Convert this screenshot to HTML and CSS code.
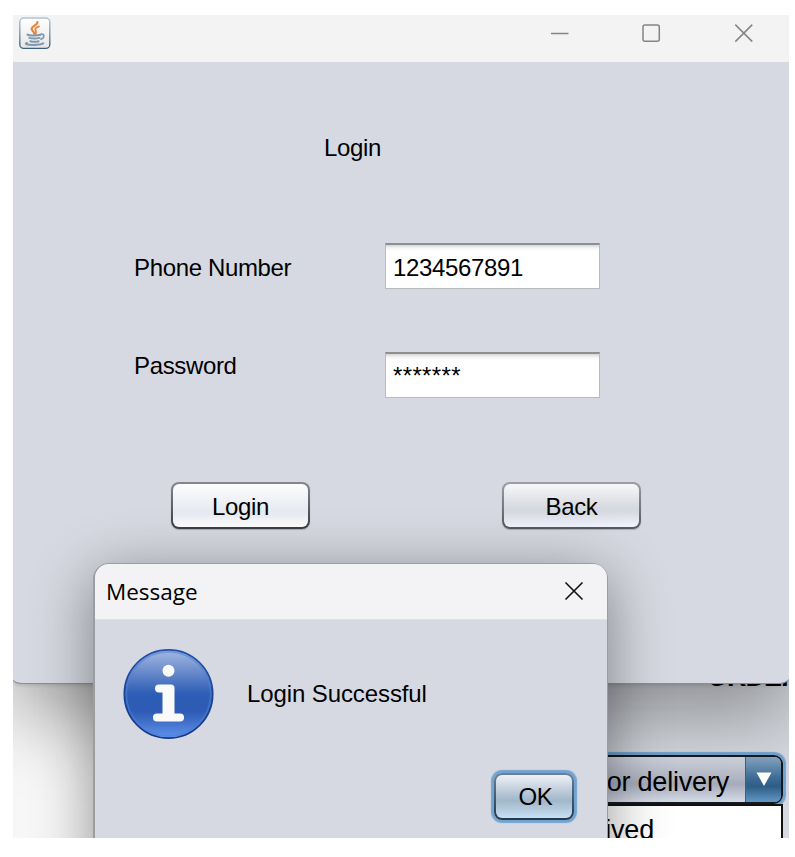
FILE: index.html
```html
<!DOCTYPE html>
<html lang="en">
<head>
<meta charset="utf-8">
<title>Login</title>
<link rel="stylesheet" href="styles.css">
</head>
<body>
<main class="desktop">
  <section class="orders">
    <div class="orders-heading">ORDER</div>
    <div class="combo">
      <span class="combo-value">or delivery</span>
      <span class="combo-arrow"><svg width="16" height="15" viewBox="0 0 16 15"><path d="M0.5 0.5H15.5L8 14Z" fill="#fff"/></svg></span>
    </div>
    <div class="popup">ived</div>
  </section>

  <section class="window">
    <header class="titlebar">
      <svg class="java" width="32" height="33" viewBox="0 0 32 33">
        <defs>
          <linearGradient id="jf" x1="0" y1="0" x2="0" y2="1"><stop offset="0" stop-color="#fff"/><stop offset="1" stop-color="#e6e6e6"/></linearGradient>
          <linearGradient id="js" x1="0" y1="0" x2="0" y2="1"><stop offset="0" stop-color="#b5c4d0"/><stop offset=".5" stop-color="#8299aa"/><stop offset="1" stop-color="#3f6078"/></linearGradient>
        </defs>
        <rect x="0.8" y="1" width="30" height="30.4" rx="4" fill="url(#jf)" stroke="url(#js)" stroke-width="1.4"/>
        <g fill="none" stroke="#e8833a" stroke-linecap="round">
          <path d="M18.4 5C19.2 8 12.3 9 12.6 12C12.8 13.8 15.2 14.8 15.5 16.8" stroke-width="2.2"/>
          <path d="M20 9.4C17 10.6 15.8 11.8 16.6 13.2C17.4 14.6 17.8 15.5 16.6 17" stroke-width="1.8"/>
        </g>
        <g fill="none" stroke="#7e98ae" stroke-linecap="round">
          <path d="M8.5 17.6C10 18.8 19 18.8 21.5 17.8" stroke-width="2"/>
          <path d="M10.3 20.9C13 21.6 18 21.6 20.6 20.9M11.3 24.2C14 24.9 17.5 24.9 19.6 24.2" stroke-width="2"/>
          <path d="M22.3 17.2C26 16.6 25.5 21 22 22.2" stroke-width="1.7"/>
          <path d="M8 26C5 26.7 8 27.9 14 27.9C20 27.9 23.5 27.3 24.3 26.2" stroke-width="2"/>
        </g>
      </svg>
      <svg class="controls" width="204" height="20" viewBox="0 0 204 20" fill="none" stroke="#858585" stroke-width="1.5">
        <path d="M1 10.5H18.5"/>
        <rect x="93" y="2" width="16.3" height="16.3" rx="2"/>
        <path d="M185.3 1.6L202.3 18.6M202.3 1.6L185.3 18.6"/>
      </svg>
    </header>
    <div class="form">
      <div class="form-title">Login</div>
      <div class="row row-phone"><span class="label">Phone Number</span><span class="field">1234567891</span></div>
      <div class="row row-password"><span class="label label-password">Password</span><span class="field field-password">*******</span></div>
      <div class="actions"><button class="button button-hot">Login</button><button class="button">Back</button></div>
    </div>
  </section>

  <section class="dialog">
    <header class="dialog-title">
      <span>Message</span>
      <svg width="20" height="20" viewBox="0 0 20 20" stroke="#111" stroke-width="1.6"><path d="M1.5 1.5L18.5 18.5M18.5 1.5L1.5 18.5"/></svg>
    </header>
    <div class="dialog-content">
      <svg width="92" height="92" viewBox="0 0 92 92">
        <defs>
          <linearGradient id="ib" x1="0" y1="0" x2="0" y2="1"><stop offset="0" stop-color="#a5b9e3"/><stop offset=".25" stop-color="#698bcc"/><stop offset=".5" stop-color="#2d5db5"/><stop offset=".7" stop-color="#2d5bb5"/><stop offset="1" stop-color="#6092ec"/></linearGradient>
          <linearGradient id="ie" x1="0" y1="0" x2="0" y2="1"><stop offset="0" stop-color="#2452a8"/><stop offset="1" stop-color="#153a80"/></linearGradient>
        </defs>
        <circle cx="45.5" cy="46" r="44.2" fill="url(#ib)" stroke="url(#ie)" stroke-width="1.7"/>
        <circle cx="45.5" cy="46" r="42.2" fill="none" stroke="#4f7fd6" stroke-opacity=".55" stroke-width="1.8"/>
        <circle cx="45.5" cy="22.8" r="6" fill="#fafafa"/>
        <path d="M36 36.5H48Q51.5 36.5 51.5 40V65.5H57A4 4 0 0 1 57 73.6H34A4 4 0 0 1 34 65.5H39.5V44.5H36A4 4 0 0 1 36 36.5Z" fill="#fafafa"/>
      </svg>
      <span class="message">Login Successful</span>
    </div>
    <div class="dialog-actions"><button class="ok">OK</button></div>
  </section>
</main>
</body>
</html>
```

FILE: styles.css
```css
* { box-sizing: border-box; }
body {
  margin: 0;
  padding: 15px 6px 19px 13px;
  background: #fff;
  color: #000;
  font: 24px/28px "Liberation Sans", Arial, sans-serif;
  letter-spacing: -0.35px;
}
.desktop {
  position: relative;
  width: 776px;
  height: 823px;
  overflow: hidden;
  background: #f7f7f7;
}

/* Partly hidden window with the order list */
.orders {
  position: absolute;
  left: 400px;
  top: 640px;
  width: 376px;
  height: 183px;
  background: #d6d9df;
  font-size: 27px;
  letter-spacing: -0.2px;
}
.orders-heading {
  height: 97px;
  padding: 7px 0 0 294px;
  font-size: 27px;
  font-weight: bold;
  line-height: 30px;
  letter-spacing: -1px;
  white-space: nowrap;
  overflow: hidden;
}
.combo {
  display: flex;
  justify-content: flex-end;
  width: 370px;
  height: 49px;
  margin-top: 3px;
  border: 2px solid #15181d;
  border-radius: 9px;
  background: linear-gradient(#d4d8e2, #b2b7c4 48%, #a7adbd 60%, #d7dbe8);
  box-shadow: 0 0 1px 3px #72a5d2;
}
.combo-value { padding: 10px 16px 0 0; line-height: 30px; }
.combo-arrow {
  width: 36px;
  padding: 15px 0 0 10px;
  line-height: 0;
  border-left: 1px solid #35658e;
  border-radius: 0 6px 6px 0;
  background: linear-gradient(#87a8c5, #416f98 45%, #2e5d87 65%, #6398c5);
}
.popup {
  width: 370px;
  height: 60px;
  padding: 9px 127px 0 0;
  border: 2px solid #111;
  background: #fff;
  line-height: 30px;
  text-align: right;
}

/* Login window */
.window {
  position: absolute;
  left: -3px;
  top: 0;
  width: 781px;
  height: 669px;
  overflow: visible;
  border-bottom: 1px solid #8c8e92;
  border-radius: 0 0 11px 11px;
  background: #d6d9e1;
  box-shadow: 0 30px 80px rgba(0, 0, 0, .36), 0 1px 4px rgba(0, 0, 0, .15);
}
.titlebar {
  display: flex;
  justify-content: space-between;
  height: 47px;
  padding: 2px 37px 0 9px;
  background: #f3f3f3;
}
.controls { margin-top: 6px; }
.form { padding: 72px 0 0 3px; }
.form-title { height: 109px; padding-left: 311px; }
.row { display: flex; padding-left: 121px; }
.row-phone { height: 109px; }
.row-password { height: 111px; }
.label { width: 251px; padding-top: 11px; }
.label-password { padding-top: 0; }
.field {
  width: 215px;
  height: 46px;
  padding: 9px 7px;
  border: 1px solid #b9babd;
  border-top: 2px solid #8d8f92;
  background: linear-gradient(#d5d5d5, #f4f4f4 3px, #fff 6px);
}
.field-password { padding-top: 8px; letter-spacing: 0.35px; }
.actions {
  display: flex;
  gap: 192px;
  padding: 19px 0 0 158px;
}
.button {
  width: 139px;
  height: 47px;
  padding: 2px 0 0;
  border: 2px solid transparent;
  border-radius: 8px;
  background:
    linear-gradient(#f7f7f9, #d6d9df 55%, #d6d9df 65%, #f2f5ff) padding-box,
    linear-gradient(#9b9fa5, #55585e) border-box;
  box-shadow: 0 1px 1px rgba(80, 85, 95, .35);
  color: inherit;
  font: inherit;
  letter-spacing: inherit;
}
.button-hot {
  background:
    linear-gradient(#fdfdfe, #e9ecf2 55%, #e7eaf1 68%, #fff) padding-box,
    linear-gradient(#83878f, #3a3d45) border-box;
}

/* Message dialog */
.dialog {
  position: absolute;
  left: 80px;
  top: 548px;
  width: 515px;
  height: 420px;
  overflow: visible;
  border: 1px solid #9b9da1;
  border-left-width: 2px;
  border-radius: 16px 16px 0 0;
  background: #d6d9e1;
  box-shadow: 0 12px 60px rgba(0, 0, 0, .42);
}
.dialog-title {
  display: flex;
  justify-content: space-between;
  height: 56px;
  padding: 14px 23px 0 11px;
  border-bottom: 1px solid #e1e1e5;
  border-radius: 14px 14px 0 0;
  background: #f3f2f4;
  font-family: "Open Sans", "Noto Sans", sans-serif;
  font-size: 22.5px;
  letter-spacing: 0;
}
.dialog-title svg { margin-top: 3px; }
.dialog-content { display: flex; height: 150px; padding: 28px 0 0 28px; }
.message { padding: 32px 0 0 32px; letter-spacing: -0.1px; }
.dialog-actions { display: flex; justify-content: flex-end; padding-right: 33px; }
.ok {
  width: 80px;
  height: 47px;
  margin-top: 3px;
  padding: 1px 0 0 3px;
  border: 2px solid transparent;
  border-radius: 8px;
  background:
    linear-gradient(#edf1f6, #b3c4d4 45%, #a1b7c9 60%, #c8e0f5) padding-box,
    linear-gradient(#69819a, #24384e) border-box;
  box-shadow: 0 0 1px 3px #73a4d1;
  color: inherit;
  font: inherit;
  letter-spacing: inherit;
}
```
